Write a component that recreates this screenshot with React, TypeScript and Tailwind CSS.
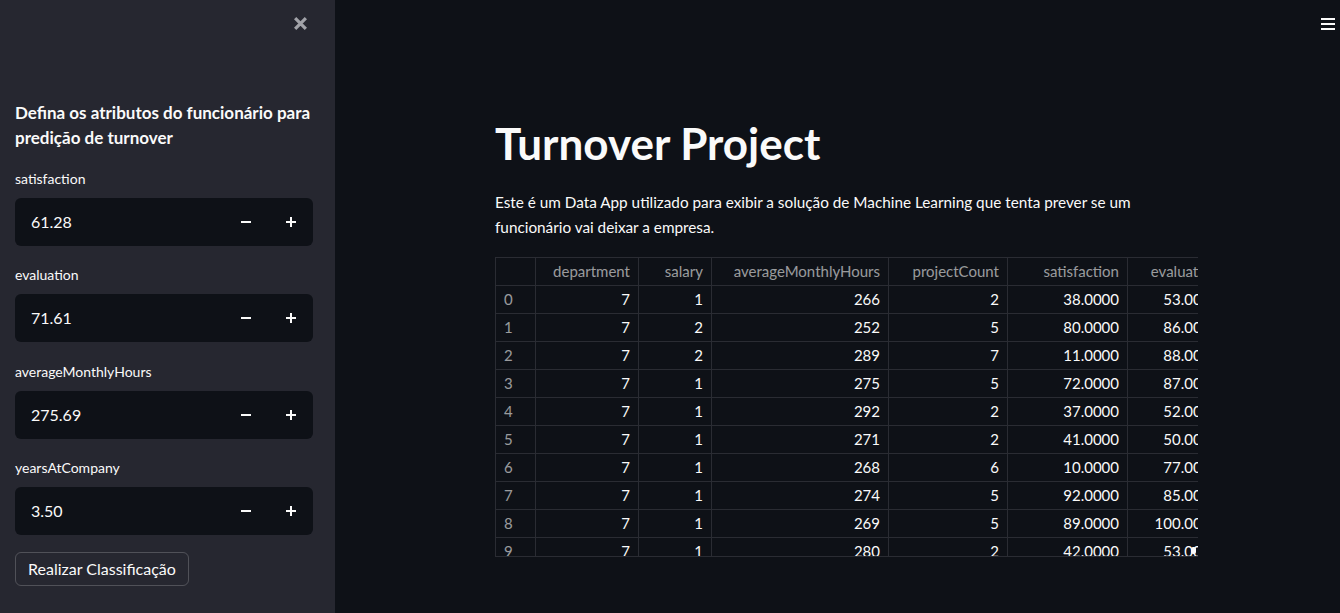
import React from "react";

const font = { fontFamily: "Lato, 'Noto Sans', sans-serif" };

const fields = [
  { label: "satisfaction", value: "61.28" },
  { label: "evaluation", value: "71.61" },
  { label: "averageMonthlyHours", value: "275.69" },
  { label: "yearsAtCompany", value: "3.50" },
];

const cols = [
  { name: "", w: 40 },
  { name: "department", w: 103 },
  { name: "salary", w: 73 },
  { name: "averageMonthlyHours", w: 177 },
  { name: "projectCount", w: 119 },
  { name: "satisfaction", w: 120 },
  { name: "evaluation", w: 100 },
  { name: "yearsAtCompany", w: 140 },
  { name: "turnover", w: 90 },
];

const rows = [
  [7, 1, 266, 2, "38.0000", "53.0000", 2, 0],
  [7, 2, 252, 5, "80.0000", "86.0000", 5, 0],
  [7, 2, 289, 7, "11.0000", "88.0000", 4, 0],
  [7, 1, 275, 5, "72.0000", "87.0000", 5, 0],
  [7, 1, 292, 2, "37.0000", "52.0000", 2, 0],
  [7, 1, 271, 2, "41.0000", "50.0000", 2, 0],
  [7, 1, 268, 6, "10.0000", "77.0000", 4, 0],
  [7, 1, 274, 5, "92.0000", "85.0000", 5, 0],
  [7, 1, 269, 5, "89.0000", "100.0000", 5, 0],
  [7, 1, 280, 2, "42.0000", "53.0000", 3, 0],
];

const tableWidth = cols.reduce((a, c) => a + c.w, 0);

function NumberInput({ label, value }: { label: string; value: string }) {
  return (
    <div className="flex flex-col">
      <div className="text-[14px] leading-[20px] text-[#fafafa] mb-[9px]">{label}</div>
      <div className="flex h-[48px] w-[298px] rounded-[6px] bg-[#0e1117] items-center">
        <div className="flex-1 pl-[16px] text-[16px] text-[#fafafa]">{value}</div>
        <div className="w-[45px] h-full flex items-center justify-center">
          <div className="w-[10px] h-[2px] bg-[#fafafa]" />
        </div>
        <div className="w-[45px] h-full flex items-center justify-center relative">
          <div className="w-[10px] h-[2px] bg-[#fafafa]" />
          <div className="absolute w-[2px] h-[10px] bg-[#fafafa]" />
        </div>
      </div>
    </div>
  );
}

export default function App() {
  return (
    <div className="flex w-[1340px] h-[613px] overflow-hidden bg-[#0e1117] text-[#fafafa]" style={font}>
      <aside className="w-[335px] shrink-0 bg-[#262730] h-full relative">
        <div className="absolute right-[27px] top-[16px] text-[#a1a2a8]">
          <svg width="15" height="15" viewBox="0 0 14 14">
            <path d="M2 2 L12 12 M12 2 L2 12" stroke="currentColor" strokeWidth="3" strokeLinecap="butt" />
          </svg>
        </div>
        <div className="pl-[15px] pt-[100px]">
          <h2 className="text-[17px] font-bold leading-[25px] text-[#fafafa] w-[305px]">
            Defina os atributos do funcionário para predição de turnover
          </h2>
          <div className="mt-[19px] flex flex-col gap-[19.3px]">
            {fields.map((f) => (
              <NumberInput key={f.label} label={f.label} value={f.value} />
            ))}
          </div>
          <button className="mt-[17px] h-[34px] px-[12px] rounded-[6px] border border-[rgba(250,250,250,0.2)] text-[16px] text-[#fafafa]">
            Realizar Classificação
          </button>
        </div>
      </aside>
      <main className="flex-1 relative">
        <div className="absolute right-[5px] top-[18px] flex flex-col gap-[3px]">
          <div className="w-[14px] h-[2px] bg-[#fafafa]" />
          <div className="w-[14px] h-[2px] bg-[#fafafa]" />
          <div className="w-[14px] h-[2px] bg-[#fafafa]" />
        </div>
        <div className="ml-[160px] w-[704px] pt-[116px]">
          <h1 className="text-[44px] font-bold leading-[54px] text-[#fafafa]">Turnover Project</h1>
          <p className="mt-[20px] w-[650px] text-[15.3px] leading-[25px] text-[#fafafa]">
            Este é um Data App utilizado para exibir a solução de Machine Learning que tenta prever se um
            funcionário vai deixar a empresa.
          </p>
          <div className="relative mt-[17px] w-[703px] h-[300px] overflow-hidden border-b border-[#2a2c33]">
            <table
              className="border-collapse text-[15px]"
              style={{ tableLayout: "fixed", width: tableWidth }}
            >
              <colgroup>
                {cols.map((c, i) => (
                  <col key={i} style={{ width: c.w }} />
                ))}
              </colgroup>
              <thead>
                <tr className="h-[28px]">
                  {cols.map((c, i) => (
                    <th
                      key={i}
                      className="border border-[#2a2c33] px-[8px] text-right font-normal text-[rgba(250,250,250,0.6)] whitespace-nowrap overflow-hidden"
                    >
                      {c.name}
                    </th>
                  ))}
                </tr>
              </thead>
              <tbody>
                {rows.map((r, i) => (
                  <tr key={i} className="h-[28px]">
                    <td className="border border-[#2a2c33] px-[8px] text-left text-[rgba(250,250,250,0.6)]">{i}</td>
                    {r.map((v, j) => (
                      <td key={j} className="border border-[#2a2c33] px-[8px] text-right whitespace-nowrap overflow-hidden">
                        {v}
                      </td>
                    ))}
                  </tr>
                ))}
              </tbody>
            </table>
            <div className="absolute right-[2px] bottom-[2px] w-[5px] h-[7px] rounded-[2px] bg-[#fafafa]" />
          </div>
        </div>
      </main>
    </div>
  );
}
